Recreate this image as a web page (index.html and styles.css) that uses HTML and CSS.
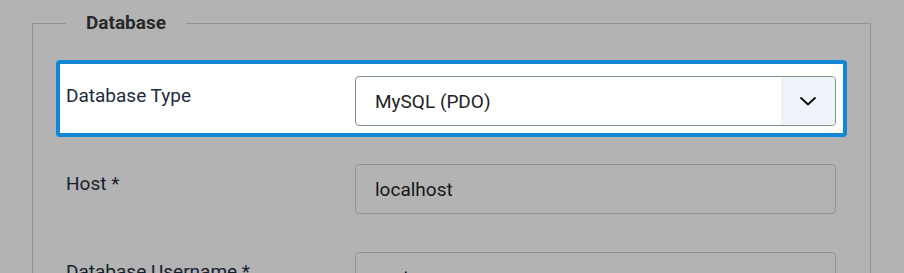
FILE: index.html
```html
<!DOCTYPE html>
<html lang="en">
<head>
<meta charset="utf-8">
<title>Database</title>
<link rel="stylesheet" href="styles.css">
</head>
<body>
<div class="page">
  <fieldset class="group">
    <legend class="legend">Database</legend>
    <div class="row row-active">
      <label class="label">Database Type</label>
      <div class="select">
        <span class="select-value">MySQL (PDO)</span>
        <span class="select-arrow">
          <svg width="18" height="10" viewBox="0 0 18 10"><path d="M1.5 1.5 L9 8.5 L16.5 1.5" fill="none" stroke="#111" stroke-width="2"/></svg>
        </span>
      </div>
    </div>
    <div class="row">
      <label class="label">Host *</label>
      <div class="input">localhost</div>
    </div>
    <div class="row">
      <label class="label">Database Username *</label>
      <div class="input">root</div>
    </div>
  </fieldset>
</div>
</body>
</html>
```
FILE: styles.css
```css
html, body {
  margin: 0;
  padding: 0;
  background: #b3b3b3;
  overflow: hidden;
}
body {
  font-family: Roboto, "Liberation Sans", sans-serif;
  width: 904px;
  height: 273px;
}
.page {
  padding: 12px 0 0 32px;
}
.group {
  margin: 0;
  border: 1px solid #939393;
  padding: 26px 23px 0 23px;
  box-sizing: content-box;
  width: 791px;
}
.legend {
  margin-left: 10px;
  padding: 0 20px;
  font-size: 19px;
  font-weight: 700;
  line-height: 22px;
  color: #27292c;
}
.row {
  display: flex;
  align-items: flex-start;
  border: 4px solid transparent;
  border-radius: 4px;
  padding: 12px 7px 7px 6px;
  margin-bottom: 11px;
}
.row-active {
  background: #fff;
  border-color: #1187d6;
}
.label {
  width: 289px;
  flex: none;
  font-size: 19px;
  line-height: 27px;
  padding-top: 6px;
  color: #17212c;
}
.row-active .label {
  color: #1c2b3e;
}
.select, .input {
  flex: 1;
  height: 50px;
  box-sizing: border-box;
  border-radius: 4px;
  font-size: 19px;
  display: flex;
  align-items: center;
}
.select {
  border: 1px solid #7d9183;
  background: #fff;
  overflow: hidden;
  color: #1e2226;
}
.select-value {
  flex: 1;
  padding-left: 19px;
}
.select-arrow {
  width: 54px;
  height: 100%;
  background: #eef3f9;
  display: flex;
  align-items: center;
  justify-content: center;
}
.input {
  border: 1px solid #909498;
  background: #b3b3b3;
  padding-left: 19px;
  color: #151719;
}
```
